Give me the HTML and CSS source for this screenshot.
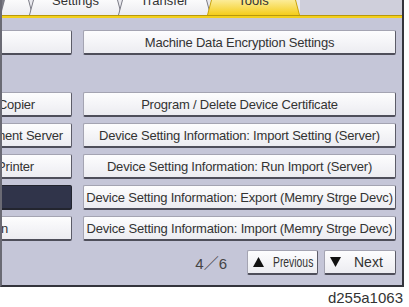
FILE: index.html
```html
<!DOCTYPE html>
<html lang="en">
<head>
    <meta charset="UTF-8">
    <meta name="viewport" content="width=device-width, initial-scale=1.0">
    <title>Tools</title>
    <link rel="stylesheet" href="styles.css">
</head>
<body>
    <div class="screen">
        <div class="tabs">
            <div class="tab first"><div class="tab-face"><span>Features</span></div></div>
            <div class="tab"><div class="tab-face"><span>Settings</span></div></div>
            <div class="tab"><div class="tab-face"><span>Transfer</span></div></div>
            <div class="tab active"><div class="tab-face"><span>Tools</span></div></div>
            <div class="tab-rest"></div>
        </div>
        <div class="tab-line"></div>

        <div class="panel">
            <div class="row-top">
                <div class="btn left"></div>
                <div class="btn">Machine Data Encryption Settings</div>
            </div>

            <div class="rows">
                <div class="btn left pad-copier"><span>Compulsory Security Stamp: Copier</span></div>
                <div class="btn">Program / Delete Device Certificate</div>

                <div class="btn left pad-docserver"><span>Compulsory Security Stamp: Document Server</span></div>
                <div class="btn">Device Setting Information: Import Setting (Server)</div>

                <div class="btn left pad-printer"><span>Compulsory Security Stamp: Printer</span></div>
                <div class="btn">Device Setting Information: Run Import (Server)</div>

                <div class="btn left dark"></div>
                <div class="btn">Device Setting Information: Export (Memry Strge Devc)</div>

                <div class="btn left pad-last"><span>Security Setting for Access Violation</span></div>
                <div class="btn">Device Setting Information: Import (Memry Strge Devc)</div>
            </div>

            <div class="pager">
                <span class="page-count">4／6</span>
                <div class="btn nav prev">
                    <svg width="11" height="10" viewBox="0 0 11 10"><polygon points="5.5,0 11,10 0,10" fill="#111"/></svg>
                    <span class="narrow">Previous</span>
                </div>
                <div class="btn nav next">
                    <svg width="11" height="10" viewBox="0 0 11 10"><polygon points="0,0 11,0 5.5,10" fill="#111"/></svg>
                    <span>Next</span>
                </div>
            </div>
        </div>
    </div>
    <div class="caption">d255a1063</div>
</body>
</html>
```

FILE: styles.css
```css
body {
    margin: 0;
    background: #fff;
    font-family: "Liberation Sans", Arial, "Noto Sans CJK JP", sans-serif;
    color: #333;
}
.screen {
    width: 400px;
    border-left: 2px solid #6a6a74;
    border-right: 2px solid #34343c;
    border-bottom: 2px solid #34343c;
    background: #c5c6d8;
}
.tabs {
    display: flex;
    height: 15px;
    overflow: hidden;
    background: #e9e9ee;
}
.tab {
    flex: none;
    width: 93px;
    margin-right: -4px;
    background: #7c7c86;
    clip-path: polygon(4px 0, calc(100% - 4px) 0, 100% 100%, 0 100%);
}
.tab.first {
    width: 33px;
    margin-left: -2px;
    clip-path: polygon(0 0, calc(100% - 4px) 0, 100% 100%, 0 100%);
}
.tab-face {
    height: 15px;
    margin: 0 1px;
    background: linear-gradient(#fbfbfc, #ececf0);
    clip-path: polygon(4px 0, calc(100% - 4px) 0, 100% 100%, 0 100%);
    text-align: center;
    font-size: 13px;
    line-height: 13px;
    overflow: hidden;
}
.tab-face span {
    display: block;
    margin-top: -6px;
}
.tab.first .tab-face span {
    visibility: hidden;
}
.tab.active {
    background: #c9a30c;
}
.tab.active .tab-face {
    background: linear-gradient(#fcec98, #f4cd1c);
}
.tab-rest {
    flex: 1;
    margin-left: 4px;
    background: #cfcfdb;
}
.tab-line {
    height: 2px;
    border-top: 1px solid #b8980c;
    background: #f3d01c;
}
.panel {
    height: 255px;
    padding: 12px 6px 0 0;
}
.row-top, .rows {
    display: grid;
    grid-template-columns: 70px 313px;
    column-gap: 11px;
}
.row-top {
    margin-bottom: 37px;
}
.rows {
    row-gap: 6px;
}
.btn {
    box-sizing: border-box;
    height: 25px;
    display: flex;
    align-items: center;
    justify-content: center;
    background: linear-gradient(#fdfdfe, #ececf1);
    border: 1px solid #a4a4b2;
    border-right-color: #5c5c68;
    border-bottom: 2px solid #4e4e5a;
    border-radius: 2px;
    font-size: 13px;
    letter-spacing: -0.2px;
    white-space: nowrap;
    overflow: hidden;
}
.btn.left {
    border-left: none;
    border-radius: 0 2px 2px 0;
    justify-content: flex-end;
}
.btn.dark {
    background: #30344a;
    border-color: #23252f;
}
.pad-copier { padding-right: 36px; }
.pad-docserver { padding-right: 8px; }
.pad-printer { padding-right: 37px; }
.pad-last { padding-right: 63px; }
.pager {
    display: flex;
    align-items: center;
    justify-content: flex-end;
    gap: 6px;
    margin-top: 9px;
}
.page-count {
    font-size: 15px;
    color: #444;
    margin-right: 14px;
}
.btn.nav {
    width: 71px;
    justify-content: flex-start;
    gap: 9px;
    padding-left: 5px;
    font-size: 14px;
    letter-spacing: 0;
}
.btn.nav svg {
    flex: none;
}
.btn.next {
    width: 72px;
    gap: 13px;
}
.narrow {
    display: inline-block;
    transform: scaleX(0.74);
    transform-origin: left center;
}
.caption {
    width: 403px;
    margin-top: 3px;
    text-align: right;
    font-size: 15px;
    line-height: 16px;
    color: #333;
}
```
